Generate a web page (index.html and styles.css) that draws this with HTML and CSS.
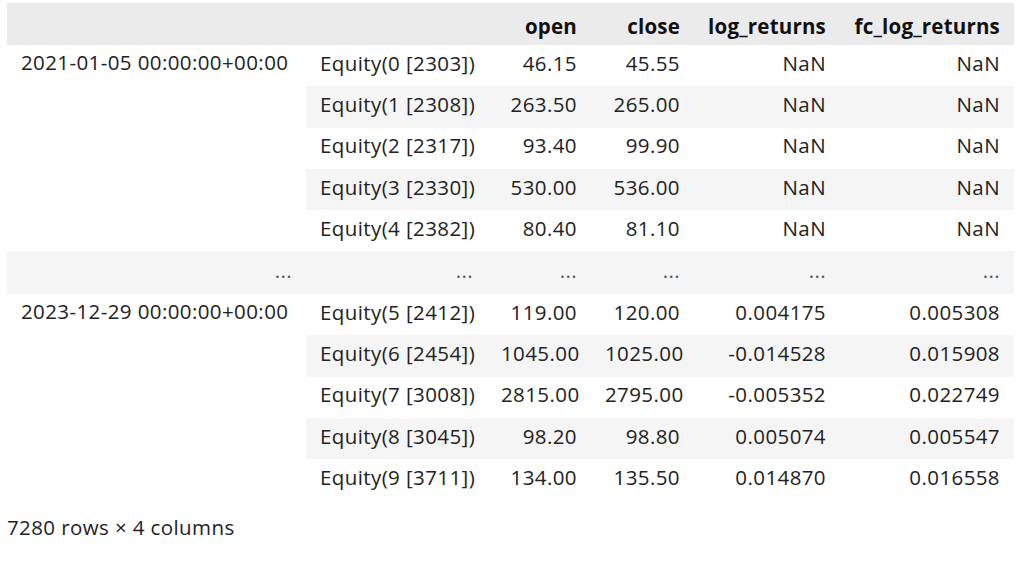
FILE: index.html
```html
<!DOCTYPE html>
<html>
<head>
<meta charset="utf-8">
<link rel="stylesheet" href="styles.css">
</head>
<body>
<div class="output">
<table class="df">
  <colgroup>
    <col class="c0"><col class="c1"><col class="c2"><col class="c3"><col class="c4"><col class="c5">
  </colgroup>
  <thead>
    <tr><th></th><th></th><th>open</th><th>close</th><th>log_returns</th><th>fc_log_returns</th></tr>
  </thead>
  <tbody>
    <tr><th class="lvl0" rowspan="5">2021-01-05 00:00:00+00:00</th><th class="lvl1">Equity(0 [2303])</th><td>46.15</td><td>45.55</td><td>NaN</td><td>NaN</td></tr>
    <tr><th class="lvl1">Equity(1 [2308])</th><td>263.50</td><td>265.00</td><td>NaN</td><td>NaN</td></tr>
    <tr><th class="lvl1">Equity(2 [2317])</th><td>93.40</td><td>99.90</td><td>NaN</td><td>NaN</td></tr>
    <tr><th class="lvl1">Equity(3 [2330])</th><td>530.00</td><td>536.00</td><td>NaN</td><td>NaN</td></tr>
    <tr><th class="lvl1">Equity(4 [2382])</th><td>80.40</td><td>81.10</td><td>NaN</td><td>NaN</td></tr>
    <tr class="dots"><th class="lvl0 r">...</th><th class="lvl1 r">...</th><td>...</td><td>...</td><td>...</td><td>...</td></tr>
    <tr><th class="lvl0" rowspan="5">2023-12-29 00:00:00+00:00</th><th class="lvl1">Equity(5 [2412])</th><td>119.00</td><td>120.00</td><td>0.004175</td><td>0.005308</td></tr>
    <tr><th class="lvl1">Equity(6 [2454])</th><td>1045.00</td><td>1025.00</td><td>-0.014528</td><td>0.015908</td></tr>
    <tr><th class="lvl1">Equity(7 [3008])</th><td>2815.00</td><td>2795.00</td><td>-0.005352</td><td>0.022749</td></tr>
    <tr><th class="lvl1">Equity(8 [3045])</th><td>98.20</td><td>98.80</td><td>0.005074</td><td>0.005547</td></tr>
    <tr><th class="lvl1">Equity(9 [3711])</th><td>134.00</td><td>135.50</td><td>0.014870</td><td>0.016558</td></tr>
  </tbody>
</table>
<p class="shape">7280 rows × 4 columns</p>
</div>
</body>
</html>
```

FILE: styles.css
```css
html, body {
  margin: 0;
  padding: 0;
  background: #ffffff;
}
body {
  font-family: "Open Sans", "Noto Sans", sans-serif;
  font-size: 20.5px;
  letter-spacing: 0.4px;
  color: #222222;
}
.output {
  padding: 3px 0 0 7px;
}
.df {
  border-collapse: collapse;
  border-spacing: 0;
  table-layout: fixed;
  width: 1007px;
}
.c0 { width: 299px; }
.c1 { width: 181px; }
.c2 { width: 104px; }
.c3 { width: 103px; }
.c4 { width: 146px; }
.c5 { width: 174px; }
.df th, .df td {
  padding: 0 14px 6px 14px;
  height: 35.3px;
  line-height: 28px;
  text-align: right;
  vertical-align: middle;
  white-space: nowrap;
  font-weight: normal;
}
.df thead th {
  height: 38px;
  padding-top: 4px;
  padding-bottom: 0;
  background: #ebebeb;
  font-weight: bold;
  letter-spacing: 0.2px;
  color: #111;
}
.df tbody th.lvl0 {
  text-align: left;
  vertical-align: top;
  padding-top: 3px;
  background: #ffffff;
}
.df tbody th.lvl1 {
  text-align: left;
}
.df tbody th.r {
  text-align: right;
}
.df tbody tr:nth-child(even) th.lvl1,
.df tbody tr:nth-child(even) td {
  background: #f5f5f5;
}
.df tbody tr.dots th, .df tbody tr.dots td {
  background: #f5f5f5;
  height: 36.5px;
  color: #555;
}
.df tbody tr.dots th.lvl0 {
  vertical-align: middle;
  padding-top: 0;
  background: #f5f5f5;
}
.shape {
  margin: 0;
  padding-top: 13px;
  line-height: 28px;
}
```
